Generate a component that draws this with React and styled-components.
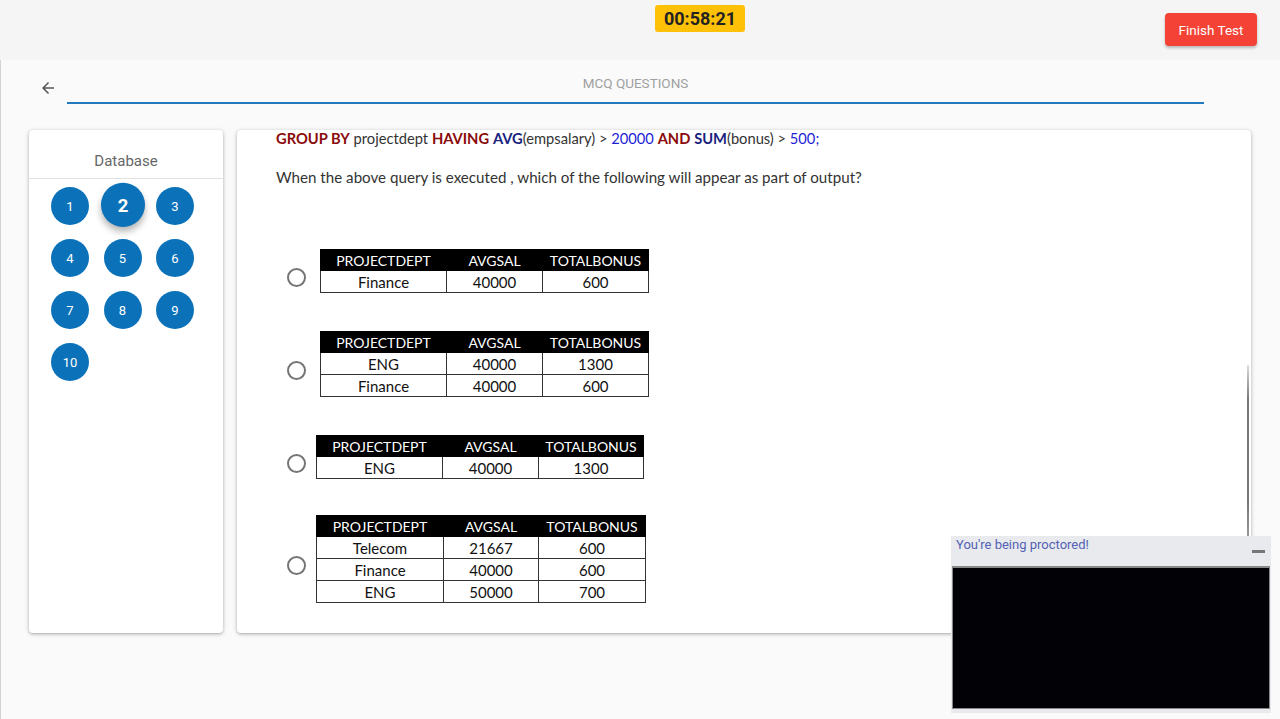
import styled, { createGlobalStyle } from "styled-components";

const GlobalStyle = createGlobalStyle`
  html, body {
    margin: 0;
    padding: 0;
    background: #fafafa;
    font-family: Roboto, "Liberation Sans", sans-serif;
  }
  * { box-sizing: border-box; }
`;

const Page = styled.div`
  width: 1280px;
  height: 719px;
  overflow: hidden;
  position: relative;
`;

const TopBar = styled.div`
  height: 60px;
  background: #f5f5f5;
  display: grid;
  grid-template-columns: 655px auto 1fr;
  align-items: start;
  padding-right: 23px;
`;

const Timer = styled.div`
  grid-column: 2;
  margin-top: 5px;
  width: 90px;
  height: 27px;
  background: #ffc107;
  border-radius: 3px;
  display: flex;
  align-items: center;
  justify-content: center;
  font-size: 18px;
  font-weight: 700;
  color: #222;
`;

const FinishButton = styled.button`
  grid-column: 3;
  justify-self: end;
  margin-top: 13px;
  width: 92px;
  height: 33px;
  border: none;
  border-radius: 4px;
  background: #f44336;
  color: #fff;
  font-family: Roboto, sans-serif;
  font-size: 13.5px;
  box-shadow: 0 2px 3px rgba(0, 0, 0, 0.25);
`;

const Main = styled.div`
  height: 659px;
  border-left: 1px solid #d4d4d4;
  background: #fafafa;
  padding: 0 29px 0 28px;
`;

const HeaderRow = styled.div`
  display: flex;
  align-items: flex-start;
  height: 70px;
  padding-top: 14px;
`;

const BackButton = styled.div`
  width: 38px;
  padding-left: 10px;
  padding-top: 5px;
  color: #555;
  display: flex;
`;

const TitleBar = styled.div`
  width: 1137px;
  height: 30px;
  border-bottom: 2px solid #2479bd;
  text-align: center;
  font-size: 13.5px;
  color: #a0a0a0;
  padding-top: 1px;
`;

const Cards = styled.div`
  display: flex;
  gap: 14px;
`;

const Card = styled.div`
  background: #fff;
  border-radius: 4px;
  box-shadow: 0 1px 4px rgba(0, 0, 0, 0.25), 0 1px 2px rgba(0, 0, 0, 0.12);
  height: 503px;
`;

const SideCard = styled(Card)`
  width: 194px;
`;

const SideTitle = styled.div`
  height: 49px;
  border-bottom: 1px solid #e0e0e0;
  text-align: center;
  font-size: 15px;
  color: #666;
  padding-top: 22px;
`;

const NumGrid = styled.div`
  display: grid;
  grid-template-columns: repeat(3, 38px);
  column-gap: 14.5px;
  row-gap: 14px;
  padding: 8px 0 0 22px;
`;

const NumCircle = styled.div`
  width: 38px;
  height: 38px;
  border-radius: 50%;
  background: #0b72b9;
  color: #fff;
  display: flex;
  align-items: center;
  justify-content: center;
  font-size: ${(p) => (p.$active ? "16px" : "13px")};
  font-weight: ${(p) => (p.$active ? 700 : 400)};
  transform: ${(p) => (p.$active ? "scale(1.16) translateY(-1px)" : "none")};
  box-shadow: ${(p) => (p.$active ? "0 4px 6px rgba(0,0,0,0.3)" : "none")};
`;

const QuestionCard = styled(Card)`
  width: 1014px;
  position: relative;
  overflow: hidden;
  padding: 0 0 0 39px;
  font-family: Lato, "Open Sans", sans-serif;
  color: #333;
`;

const SqlLine = styled.div`
  font-size: 14.7px;
  line-height: 16px;
`;

const Kw = styled.span`
  font-weight: 700;
  color: ${(p) => (p.$fn ? "#1a237e" : "#8b0a0a")};
`;

const Num = styled.span`
  color: #1f1fd6;
`;

const QuestionText = styled.div`
  font-size: 15.15px;
  margin-top: 22px;
  margin-bottom: 63px;
`;

const Option = styled.div`
  display: flex;
  align-items: center;
  gap: ${(p) => p.$gap}px;
  margin-bottom: ${(p) => p.$mb}px;
  padding-left: 11px;
`;

const Radio = styled.div`
  width: 19px;
  height: 19px;
  margin-top: 13px;
  border-radius: 50%;
  border: 2px solid #757575;
  flex-shrink: 0;
`;

const Table = styled.table`
  border-collapse: collapse;
  font-family: Lato, "Open Sans", sans-serif;
  color: #111;
  th {
    background: #000;
    color: #fff;
    font-size: 14px;
    font-weight: 400;
    height: 21px;
    padding: 0;
    border: 1px solid #000;
  }
  td {
    font-size: 15px;
    height: 22px;
    padding: 0;
    text-align: center;
    border: 1px solid #333;
  }
`;

const ScrollMark = styled.div`
  position: absolute;
  right: 2px;
  top: 235px;
  width: 2px;
  height: 172px;
  background: linear-gradient(to bottom, #ddd, #777 20%, #777 80%, #999);
  border-radius: 1px;
`;

const Proctor = styled.div`
  position: absolute;
  left: 951px;
  top: 536px;
  width: 320px;
  height: 177px;
  background: #e8eaed;
  display: flex;
  flex-direction: column;
`;

const ProctorHead = styled.div`
  height: 30px;
  display: flex;
  justify-content: space-between;
  align-items: flex-start;
  padding: 1px 6px 0 5px;
  font-size: 13px;
  color: #5461b5;
`;

const Minimize = styled.div`
  width: 13px;
  height: 3px;
  background: #777;
  margin-top: 13px;
`;

const Video = styled.div`
  margin: 0 1px;
  height: 143px;
  background: #020206;
  border: 1px solid #888;
  border-top: 2px solid #888;
`;

const tables = [
  { widths: [126, 96, 106], gap: 14, mb: 38, rows: [["Finance", "40000", "600"]] },
  {
    widths: [126, 96, 106],
    gap: 14,
    mb: 38,
    rows: [
      ["ENG", "40000", "1300"],
      ["Finance", "40000", "600"],
    ],
  },
  { widths: [126, 96, 105], gap: 10, mb: 36, rows: [["ENG", "40000", "1300"]] },
  {
    widths: [127, 95, 107],
    gap: 10,
    mb: 0,
    rows: [
      ["Telecom", "21667", "600"],
      ["Finance", "40000", "600"],
      ["ENG", "50000", "700"],
    ],
  },
];

const App = () => {
  return (
    <Page>
      <GlobalStyle />
      <TopBar>
        <Timer>00:58:21</Timer>
        <FinishButton>Finish Test</FinishButton>
      </TopBar>
      <Main>
        <HeaderRow>
          <BackButton>
            <svg width="18" height="18" viewBox="0 0 24 24" fill="currentColor">
              <path d="M20 11H7.83l5.59-5.59L12 4l-8 8 8 8 1.41-1.41L7.83 13H20v-2z" />
            </svg>
          </BackButton>
          <TitleBar>MCQ QUESTIONS</TitleBar>
        </HeaderRow>
        <Cards>
          <SideCard>
            <SideTitle>Database</SideTitle>
            <NumGrid>
              {[1, 2, 3, 4, 5, 6, 7, 8, 9, 10].map((n) => (
                <NumCircle key={n} $active={n === 2}>
                  {n}
                </NumCircle>
              ))}
            </NumGrid>
          </SideCard>
          <QuestionCard>
            <SqlLine>
              <Kw>GROUP BY</Kw> projectdept <Kw>HAVING</Kw> <Kw $fn>AVG</Kw>(empsalary) &gt;{" "}
              <Num>20000</Num> <Kw>AND</Kw> <Kw $fn>SUM</Kw>(bonus) &gt; <Num>500;</Num>
            </SqlLine>
            <QuestionText>
              When the above query is executed , which of the following will appear as part of output?
            </QuestionText>
            {tables.map((t, i) => (
              <Option key={i} $gap={t.gap} $mb={t.mb}>
                <Radio />
                <Table>
                  <thead>
                    <tr>
                      <th style={{ width: t.widths[0] }}>PROJECTDEPT</th>
                      <th style={{ width: t.widths[1] }}>AVGSAL</th>
                      <th style={{ width: t.widths[2] }}>TOTALBONUS</th>
                    </tr>
                  </thead>
                  <tbody>
                    {t.rows.map((r, j) => (
                      <tr key={j}>
                        {r.map((c, k) => (
                          <td key={k}>{c}</td>
                        ))}
                      </tr>
                    ))}
                  </tbody>
                </Table>
              </Option>
            ))}
            <ScrollMark />
          </QuestionCard>
        </Cards>
      </Main>
      <Proctor>
        <ProctorHead>
          You're being proctored!
          <Minimize />
        </ProctorHead>
        <Video />
      </Proctor>
    </Page>
  );
};

export default App;
